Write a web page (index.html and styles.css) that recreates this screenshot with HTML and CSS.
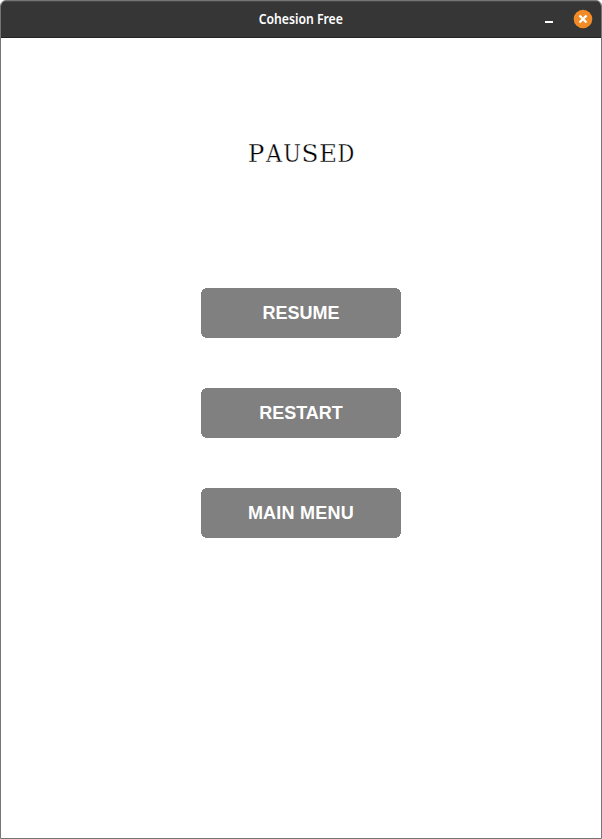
FILE: index.html
```html
<!DOCTYPE html>
<html lang="en">
<head>
<meta charset="utf-8">
<title>Cohesion Free</title>
<link rel="stylesheet" href="styles.css">
</head>
<body>
<div class="window">
  <header class="titlebar">
    <div class="title">Cohesion Free</div>
    <div class="controls">
      <svg class="minimize" width="8" height="20" viewBox="0 0 8 20"><path d="M0 12h8v2H0z" fill="#fff"/></svg>
      <svg class="close" width="20" height="20" viewBox="0 0 20 20"><circle cx="10" cy="10" r="9.3" fill="#f28b26"/><path d="M6.5 6.5l7 7M13.5 6.5l-7 7" stroke="#fff" stroke-width="2.3"/></svg>
    </div>
  </header>
  <main class="menu">
    <h1 class="heading"><span class="wide">P</span><span>A</span><span class="narrow">U</span><span class="wide">S</span><span class="wide">E</span><span class="narrow">D</span></h1>
    <button class="button">RESUME</button>
    <button class="button">RESTART</button>
    <button class="button spaced">MAIN MENU</button>
  </main>
</div>
</body>
</html>
```
FILE: styles.css
```css
* { box-sizing: border-box; }
body { margin: 0; background: #fff; }
.window { height: 839px; border: 1px solid #757575; border-radius: 6px 6px 0 0; overflow: hidden; background: #fff; }
.titlebar { display: grid; grid-template-columns: 1fr auto 1fr; align-items: center; height: 37px; padding-bottom: 1px; background: #363636; border-top: 1px solid #484848; border-bottom: 1px solid #242424; }
.title { grid-column: 2; color: #fff; font: 600 13px/20px "Noto Sans", sans-serif; transform: scale(.94, 1.04); }
.controls { display: flex; justify-content: flex-end; gap: 20px; padding-right: 8px; }
.menu { display: flex; flex-direction: column; align-items: center; gap: 50px; padding-top: 100px; }
.heading { display: flex; margin: 0 0 50px; height: 50px; font: 400 24.5px/32px "DejaVu Serif Condensed", "DejaVu Serif", serif; font-stretch: condensed; color: #000; -webkit-text-stroke: .3px #fff; }
.heading span { display: flex; justify-content: center; width: 18px; }
.heading .wide { transform: scaleX(1.12); }
.heading .narrow { transform: scaleX(.95); }
.button { width: 200px; height: 50px; padding: 0; border: 0; background: #808080; color: #fff; font: bold 18px/50px "Liberation Sans", sans-serif; clip-path: polygon(0 4px, 1px 4px, 1px 2px, 2px 2px, 2px 1px, 4px 1px, 4px 0, 196px 0, 196px 1px, 198px 1px, 198px 2px, 199px 2px, 199px 4px, 200px 4px, 200px 46px, 199px 46px, 199px 48px, 198px 48px, 198px 49px, 196px 49px, 196px 50px, 4px 50px, 4px 49px, 2px 49px, 2px 48px, 1px 48px, 1px 46px, 0 46px); }
.spaced { letter-spacing: .25px; }
```
